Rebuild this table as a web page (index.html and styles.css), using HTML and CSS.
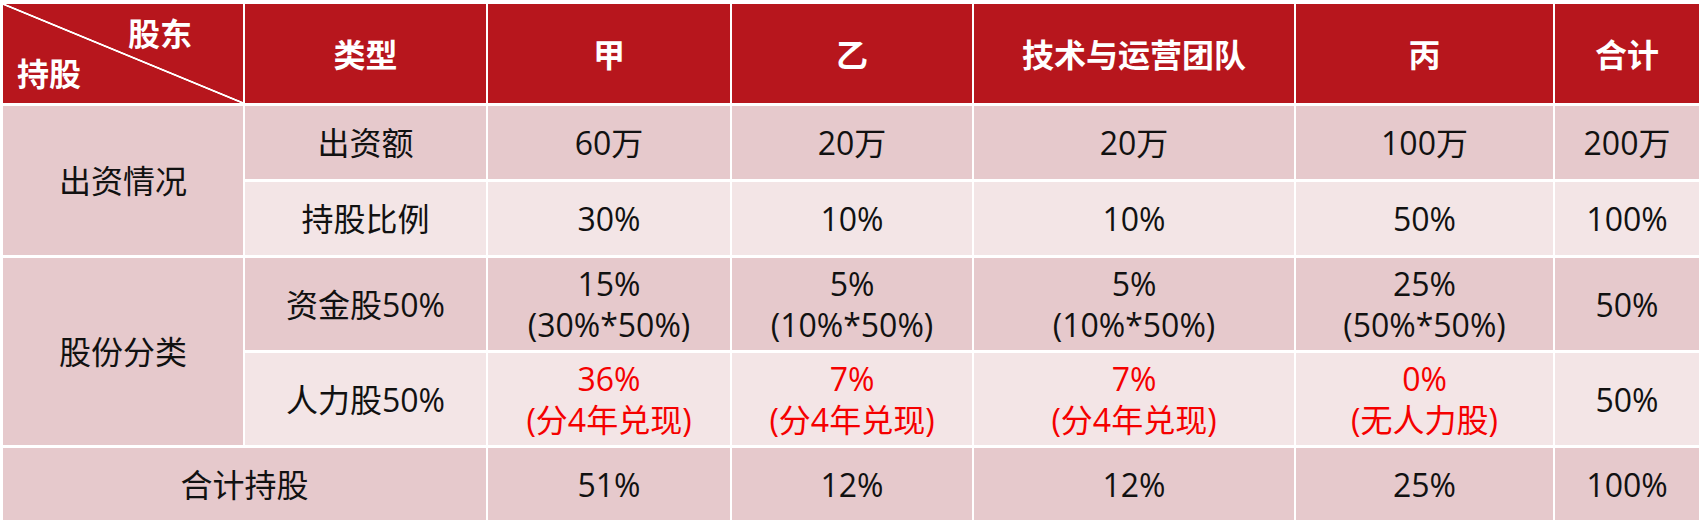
FILE: index.html
```html
<!DOCTYPE html>
<html lang="zh-CN">
<head>
<meta charset="utf-8">
<title>股份分配表</title>
<link rel="stylesheet" href="styles.css">
</head>
<body>
<div class="sheet">
  <div class="cell head corner">
    <span class="corner-top">股东</span>
    <span class="corner-bottom">持股</span>
  </div>
  <div class="cell head">类型</div>
  <div class="cell head">甲</div>
  <div class="cell head">乙</div>
  <div class="cell head">技术与运营团队</div>
  <div class="cell head">丙</div>
  <div class="cell head">合计</div>

  <div class="cell dark span-rows">出资情况</div>
  <div class="cell dark">出资额</div>
  <div class="cell dark">60万</div>
  <div class="cell dark">20万</div>
  <div class="cell dark">20万</div>
  <div class="cell dark">100万</div>
  <div class="cell dark">200万</div>

  <div class="cell light">持股比例</div>
  <div class="cell light">30%</div>
  <div class="cell light">10%</div>
  <div class="cell light">10%</div>
  <div class="cell light">50%</div>
  <div class="cell light">100%</div>

  <div class="cell dark span-rows">股份分类</div>
  <div class="cell dark">资金股50%</div>
  <div class="cell dark"><span>15%</span><span>(30%*50%)</span></div>
  <div class="cell dark"><span>5%</span><span>(10%*50%)</span></div>
  <div class="cell dark"><span>5%</span><span>(10%*50%)</span></div>
  <div class="cell dark"><span>25%</span><span>(50%*50%)</span></div>
  <div class="cell dark">50%</div>

  <div class="cell light">人力股50%</div>
  <div class="cell light red"><span>36%</span><span>(分4年兑现)</span></div>
  <div class="cell light red"><span>7%</span><span>(分4年兑现)</span></div>
  <div class="cell light red"><span>7%</span><span>(分4年兑现)</span></div>
  <div class="cell light red"><span>0%</span><span>(无人力股)</span></div>
  <div class="cell light">50%</div>

  <div class="cell dark span-cols">合计持股</div>
  <div class="cell dark">51%</div>
  <div class="cell dark">12%</div>
  <div class="cell dark">12%</div>
  <div class="cell dark">25%</div>
  <div class="cell dark">100%</div>
</div>
</body>
</html>
```
FILE: styles.css
```css
html, body {
  margin: 0;
  padding: 0;
  background: #ffffff;
}

body {
  padding: 4px 0 0 3px;
  font-family: "Open Sans", "Noto Sans CJK SC", sans-serif;
  font-size: 32px;
  color: #111111;
}

.sheet {
  display: grid;
  grid-template-columns: 240px 241px 242px 240px 320px 257px 144px;
  grid-template-rows: 99px 73px 73px 92px 92px 72px;
  column-gap: 2px;
  row-gap: 3px;
  width: 1696px;
}

.cell {
  display: flex;
  flex-direction: column;
  align-items: center;
  justify-content: center;
  text-align: center;
  line-height: 41px;
  white-space: nowrap;
}

.head {
  background: #b7161d;
  color: #ffffff;
  font-weight: 700;
  font-family: "Noto Sans CJK SC", sans-serif;
}

.corner {
  align-items: stretch;
  padding: 0 51px 4px 14px;
  background: linear-gradient(to top right, #b7161d calc(50% - 1.3px), #ffffff calc(50% - 0.6px), #ffffff calc(50% + 0.6px), #b7161d calc(50% + 1.3px));
}

.corner-top {
  text-align: right;
  line-height: 40px;
}

.corner-bottom {
  text-align: left;
  line-height: 40px;
}

.dark {
  background: #e6c9cc;
}

.light {
  background: #f3e5e6;
}

.red {
  color: #f50000;
}

.span-rows {
  grid-row: span 2;
}

.span-cols {
  grid-column: span 2;
}
```
